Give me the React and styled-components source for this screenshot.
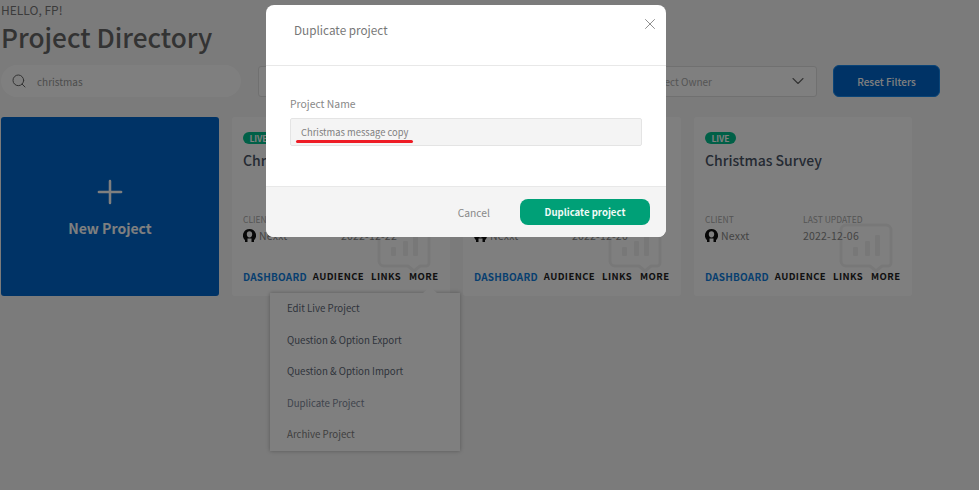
import styled, { createGlobalStyle } from 'styled-components'
import { Search, ChevronDown, Plus, X } from 'lucide-react'

const GlobalStyle = createGlobalStyle`
  html, body {
    margin: 0;
    padding: 0;
    background: #f6f6f6;
  }
  body {
    width: 979px;
    height: 490px;
    overflow: hidden;
    font-family: "Noto Sans CJK KR", "Noto Sans", sans-serif;
  }
  * {
    box-sizing: border-box;
  }
`

const Page = styled.div`
  position: relative;
  width: 979px;
  height: 490px;
  padding: 1px 0 0 1px;
  overflow: hidden;
`

const Hello = styled.div`
  font-size: 12px;
  line-height: 18px;
  color: #777;
`

const Title = styled.h1`
  margin: 0;
  font-size: 26.2px;
  font-weight: 500;
  line-height: 36px;
  color: #666;
`

const Filters = styled.div`
  display: flex;
  align-items: center;
  margin-top: 10px;
`

const SearchBox = styled.div`
  width: 240px;
  height: 32px;
  border-radius: 16px;
  background: #fff;
  display: flex;
  align-items: center;
  gap: 10px;
  padding-left: 10px;
  font-size: 10px;
  color: #999;
  margin-right: 17px;

  & svg {
    color: #666;
  }
`

const Select = styled.div`
  width: 559px;
  height: 31px;
  border: 1px solid #e0e0e0;
  border-radius: 3px;
  background: #fff;
  display: flex;
  align-items: center;
  justify-content: flex-end;
  gap: 76px;
  padding-right: 8px;
  font-size: 10px;
  color: #aaa;
  margin-right: 16px;

  & svg {
    color: #666;
  }
`

const ResetButton = styled.button`
  width: 107px;
  height: 32px;
  border: 1px solid #1488ee;
  border-radius: 6px;
  background: #0066cc;
  color: #fff;
  font-family: inherit;
  font-size: 10px;
  font-weight: 500;
  padding: 0;
`

const Grid = styled.div`
  display: grid;
  grid-template-columns: repeat(4, 218px);
  gap: 13px;
  margin-top: 20px;
`

const NewCard = styled.div`
  height: 179px;
  border-radius: 3px;
  background: #0066cc;
  color: #fff;
  display: flex;
  flex-direction: column;
  align-items: center;
  padding-top: 56px;
  font-size: 14px;
  font-weight: 700;

  & svg {
    margin-bottom: 7px;
  }
`

const Card = styled.div`
  position: relative;
  height: 179px;
  border-radius: 3px;
  background: #fff;
  padding: 15px 11px 0;
  overflow: hidden;
`

const Badge = styled.span`
  display: block;
  width: 31px;
  height: 12px;
  border-radius: 6px;
  background: #00c08e;
  color: #fff;
  font-size: 8.5px;
  font-weight: 700;
  line-height: 12px;
  text-align: center;
`

const CardTitle = styled.div`
  margin-top: 6px;
  font-size: 14px;
  font-weight: 500;
  line-height: 20px;
  color: #4a5466;
`

const Meta = styled.div`
  position: relative;
  display: grid;
  grid-template-columns: 98px 1fr;
  margin-top: 43px;
`

const MetaLabel = styled.div`
  font-size: 8.5px;
  line-height: 12px;
  color: #aaa;
`

const MetaValue = styled.div`
  display: flex;
  align-items: center;
  gap: 3px;
  margin-top: 3px;
  height: 14px;
  font-size: 10.5px;
  letter-spacing: 0.2px;
  color: #888;
`

const Avatar = styled.svg`
  width: 13px;
  height: 13px;
`

const Watermark = styled.svg`
  position: absolute;
  right: 19px;
  top: 106px;
  width: 54px;
  height: 50px;
  color: #f1f1f1;
`

const Tabs = styled.div`
  position: relative;
  display: flex;
  align-items: center;
  margin-top: 26px;
  font-size: 9.5px;
  font-weight: 700;
  letter-spacing: 0.4px;
`

const Tab = styled.span`
  margin-right: ${p => p.$gap}px;
  color: ${p => (p.$active ? '#0f7fe0' : '#222')};
  font-size: ${p => (p.$active ? '10px' : '9.5px')};
  letter-spacing: ${p => (p.$active ? '0.2px' : '0.4px')};
  position: relative;
  top: ${p => (p.$active ? '1px' : '0')};
`

const Menu = styled.div`
  position: absolute;
  left: 270px;
  top: 293px;
  width: 190px;
  height: 158px;
  background: #fff;
  box-shadow: 0 0 4px rgba(0, 0, 0, 0.3);
  padding: 6px 17px 0;

  &::before {
    content: '';
    position: absolute;
    top: -6px;
    left: 153px;
    border-left: 7px solid transparent;
    border-right: 7px solid transparent;
    border-bottom: 6px solid #fff;
  }
`

const MenuItem = styled.div`
  height: 31.6px;
  line-height: 18px;
  font-size: 9.7px;
  color: ${p => (p.$muted ? '#80889a' : p.$soft ? '#808080' : '#606878')};
`

const Backdrop = styled.div`
  position: absolute;
  inset: 0;
  background: rgba(0, 0, 0, 0.5);
`

const Modal = styled.div`
  position: absolute;
  left: 266px;
  top: 5px;
  width: 400px;
  height: 232px;
  background: #fff;
  border-radius: 8px;
  overflow: hidden;
  display: flex;
  flex-direction: column;
`

const ModalHeader = styled.div`
  height: 61px;
  border-bottom: 1px solid #e8e8e8;
  display: flex;
  justify-content: space-between;
  padding: 14px 7px 0 28px;
  font-size: 11.75px;
  line-height: 22px;
  color: #777;

  & svg {
    color: #777;
    margin-top: -4px;
  }
`

const ModalBody = styled.div`
  flex: 1;
  padding: 30px 24px 0;
`

const FieldLabel = styled.div`
  font-size: 10.4px;
  line-height: 16px;
  color: #888;
`

const FieldInput = styled.div`
  position: relative;
  height: 28px;
  margin-top: 6px;
  background: #f4f4f4;
  border: 1px solid #e4e4e4;
  border-radius: 2px;
  padding-left: 10px;
  font-size: 9.4px;
  line-height: 26px;
  color: #808080;
`

const RedLine = styled.span`
  position: absolute;
  left: 5px;
  top: 21px;
  width: 117px;
  height: 3px;
  border-radius: 2px;
  background: #ee1c25;
`

const ModalFooter = styled.div`
  height: 51px;
  background: #f4f4f4;
  border-top: 1px solid #e8e8e8;
  display: flex;
  align-items: center;
  justify-content: flex-end;
  gap: 30px;
  padding: 0 16px 0 0;
`

const CancelLink = styled.span`
  font-size: 10.3px;
  color: #888;
`

const DuplicateButton = styled.button`
  width: 130px;
  height: 26px;
  border: 0;
  border-radius: 8px;
  background: #00a077;
  color: #f1fbf7;
  font-family: inherit;
  font-size: 9.6px;
  font-weight: 700;
  padding: 0;
`

const projects = [
  { title: 'Christmas message', date: '2022-12-22' },
  { title: 'Christmas quiz', date: '2022-12-20' },
  { title: 'Christmas Survey', date: '2022-12-06' },
]

const menuItems = ['Edit Live Project', 'Question & Option Export', 'Question & Option Import', 'Duplicate Project', 'Archive Project']

function UserIcon() {
  return (
    <Avatar viewBox="0 0 13 13">
      <path d="M6.5 0A6.500 6.500 0 0 0 2 11.200V13h2.500V9.500h4V13H11v-1.800A6.500 6.500 0 0 0 6.500 0zm0 2.300c1.700 0 2.700 1.300 2.700 3s-1 3.200-2.700 3.200-2.700-1.500-2.700-3.200 1-3 2.700-3z" fill="#111" />
    </Avatar>
  )
}

function ChartBubble() {
  return (
    <Watermark viewBox="0 0 54 50" fill="none">
      <path d="M7 2h40a5 5 0 0 1 5 5v33a3 3 0 0 1-3 3H43l-6 5-6-5H7a5 5 0 0 1-5-5V7a5 5 0 0 1 5-5z" stroke="currentColor" strokeWidth="3" strokeLinejoin="round" />
      <rect x="14" y="24" width="5" height="9" rx="1" fill="currentColor" />
      <rect x="26" y="18" width="5" height="15" rx="1" fill="currentColor" />
      <rect x="36" y="12" width="5" height="21" rx="1" fill="currentColor" />
    </Watermark>
  )
}

export default function App() {
  return (
    <Page>
      <GlobalStyle />
      <Hello>HELLO, FP!</Hello>
      <Title>Project Directory</Title>
      <Filters>
        <SearchBox>
          <Search size={16} strokeWidth={1.5} />
          christmas
        </SearchBox>
        <Select>
          Project Owner
          <ChevronDown size={20} strokeWidth={1.3} />
        </Select>
        <ResetButton>Reset Filters</ResetButton>
      </Filters>
      <Grid>
        <NewCard>
          <Plus size={38} strokeWidth={1.6} />
          New Project
        </NewCard>
        {projects.map(project => (
          <Card key={project.title}>
            <ChartBubble />
            <Badge>LIVE</Badge>
            <CardTitle>{project.title}</CardTitle>
            <Meta>
              <MetaLabel>CLIENT</MetaLabel>
              <MetaLabel>LAST UPDATED</MetaLabel>
              <MetaValue><UserIcon />Nexxt</MetaValue>
              <MetaValue>{project.date}</MetaValue>
            </Meta>
            <Tabs>
              <Tab $active $gap={6}>DASHBOARD</Tab>
              <Tab $gap={7}>AUDIENCE</Tab>
              <Tab $gap={8}>LINKS</Tab>
              <Tab $gap={0}>MORE</Tab>
            </Tabs>
          </Card>
        ))}
      </Grid>
      <Menu>
        {menuItems.map(item => (
          <MenuItem key={item} $muted={item === 'Duplicate Project'} $soft={item === 'Archive Project'}>{item}</MenuItem>
        ))}
      </Menu>
      <Backdrop />
      <Modal>
        <ModalHeader>
          Duplicate project
          <X size={18} strokeWidth={1.1} />
        </ModalHeader>
        <ModalBody>
          <FieldLabel>Project Name</FieldLabel>
          <FieldInput>
            Christmas message copy
            <RedLine />
          </FieldInput>
        </ModalBody>
        <ModalFooter>
          <CancelLink>Cancel</CancelLink>
          <DuplicateButton>Duplicate project</DuplicateButton>
        </ModalFooter>
      </Modal>
    </Page>
  )
}
